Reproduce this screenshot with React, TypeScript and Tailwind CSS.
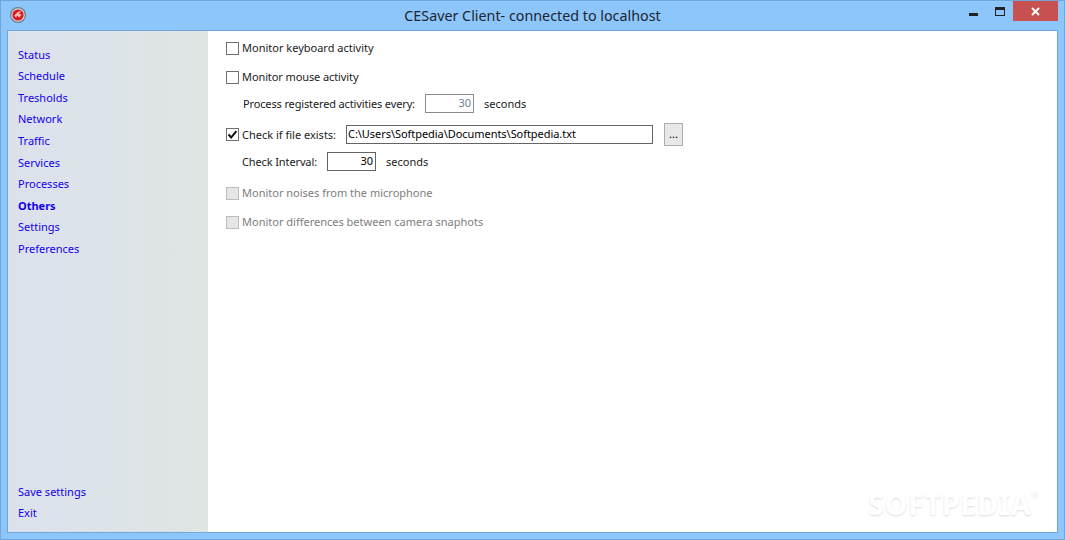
const navItems = [
  "Status",
  "Schedule",
  "Tresholds",
  "Network",
  "Traffic",
  "Services",
  "Processes",
  "Others",
  "Settings",
  "Preferences",
];

function AppIcon() {
  return (
    <svg width="16" height="16" viewBox="0 0 16 16" className="block">
      <circle cx="8" cy="8" r="8" fill="#6f7c8e" />
      <circle cx="8" cy="8" r="6.8" fill="#cfd6de" />
      <circle cx="8" cy="8" r="5.6" fill="#e0161c" />
      <path d="M4.2 8.6 L8 4.8 L11.6 4.2 L8.8 7 L11.8 7.4 L9 10.8 L7.6 8.8 L5.6 10.4 Z" fill="#f7b9b4" />
    </svg>
  );
}

function Checkbox({ checked, disabled }: { checked?: boolean; disabled?: boolean }) {
  return (
    <span
      className={
        disabled
          ? "flex h-[13px] w-[13px] shrink-0 border border-[#bcbcbc] bg-[#e6e6e6]"
          : "flex h-[13px] w-[13px] shrink-0 border border-[#707070] bg-white"
      }
    >
      {checked && (
        <svg width="11" height="11" viewBox="0 0 11 11">
          <path d="M1.5 5.5 L4.2 8.4 L9.4 2.2" fill="none" stroke="#111" strokeWidth="2" />
        </svg>
      )}
    </span>
  );
}

function NumberBox({ value, muted }: { value: string; muted?: boolean }) {
  return (
    <span
      className={
        muted
          ? "flex h-[19px] w-[49px] items-center justify-end border border-[#8a8a8a] pr-[2px] text-[#6d7f92]"
          : "flex h-[19px] w-[49px] items-center justify-end border border-[#646464] pr-[2px] text-black"
      }
    >
      {value}
    </span>
  );
}

export default function App() {
  return (
    <div className="flex h-[540px] w-[1065px] flex-col overflow-hidden border border-[#72a6d8] bg-[#8cc6fb] font-['Noto_Sans','Liberation_Sans',sans-serif] text-[11px] text-[#1a1a1a]">
      {/* title bar */}
      <div className="relative flex h-[29px] shrink-0 items-center justify-center">
        <div className="absolute left-[9px] top-[6px]">
          <AppIcon />
        </div>
        <span className="text-[14.3px] text-[#1c2530]">CESaver Client- connected to localhost</span>
        <div className="absolute right-[6px] top-0 flex items-start">
          <div className="mr-[17px] mt-[12px] h-[3px] w-[9px] bg-[#222]" />
          <div className="mr-[8px] mt-[6px] h-[9px] w-[10px] border border-t-[3px] border-[#222]" />
          <div className="flex h-[20px] w-[45px] items-center justify-center bg-[#c75050]">
            <svg width="9" height="9" viewBox="0 0 9 9">
              <path d="M1 1 L8 8 M8 1 L1 8" stroke="#fff" strokeWidth="2" />
            </svg>
          </div>
        </div>
      </div>

      <div className="mx-[6px] mb-[6px] flex min-h-0 flex-1 border border-[#72a6d8]">
        {/* sidebar */}
        <nav className="flex w-[200px] shrink-0 flex-col justify-between bg-gradient-to-r from-[#dbe2ed] to-[#dfe5e3] pb-[8px] pl-[10px] pt-[13px] text-[#1400f0]">
          <div className="flex flex-col">
            {navItems.map((item) => (
              <div
                key={item}
                className={item === "Others" ? "flex h-[21.6px] items-center font-bold" : "flex h-[21.6px] items-center"}
              >
                {item}
              </div>
            ))}
          </div>
          <div className="flex flex-col">
            <div className="flex h-[21px] items-center">Save settings</div>
            <div className="flex h-[21px] items-center">Exit</div>
          </div>
        </nav>

        {/* content */}
        <main className="relative flex-1 bg-white pl-[18px] pt-[10px]">
          <div className="flex h-[14px] items-center gap-[3px]">
            <Checkbox />
            <span>Monitor keyboard activity</span>
          </div>
          <div className="mt-[15px] flex h-[14px] items-center gap-[3px]">
            <Checkbox />
            <span className="tracking-[-0.1px]">Monitor mouse activity</span>
          </div>
          <div className="mt-[10px] flex h-[19px] items-center pl-[17px]">
            <span className="w-[182px] whitespace-nowrap pt-[2px] tracking-[-0.14px]">Process registered activities every:</span>
            <NumberBox value="30" muted />
            <span className="ml-[10px] pt-[2px]">seconds</span>
          </div>
          <div className="mt-[12px] flex h-[19px] items-center">
            <Checkbox checked />
            <span className="ml-[3px] w-[104px] pt-[2px]">Check if file exists:</span>
            <span className="flex h-[19px] w-[307px] items-center border border-[#646464] pl-[1px] tracking-[-0.05px] text-black">
              C:\Users\Softpedia\Documents\Softpedia.txt
            </span>
            <span className="ml-[11px] flex h-[23px] w-[19px] items-center justify-center border border-[#adadad] bg-[#e8e8e8] text-black">
              ...
            </span>
          </div>
          <div className="mt-[8px] flex h-[19px] items-center pl-[16px]">
            <span className="w-[85px] pt-[2px] tracking-[-0.12px]">Check Interval:</span>
            <NumberBox value="30" />
            <span className="ml-[10px] pt-[2px]">seconds</span>
          </div>
          <div className="mt-[15px] flex h-[14px] items-center gap-[3px] text-[#7d7d7d]">
            <Checkbox disabled />
            <span>Monitor noises from the microphone</span>
          </div>
          <div className="mt-[15px] flex h-[14px] items-center gap-[3px] text-[#7d7d7d]">
            <Checkbox disabled />
            <span>Monitor differences between camera snaphots</span>
          </div>
          <div className="absolute bottom-[14px] right-[18px] text-[29px] font-bold leading-none tracking-[0.5px] text-white [text-shadow:0_1px_2px_rgba(0,0,0,0.14)]">
            SOFTPEDIA<span className="align-top text-[9px]">®</span>
          </div>
        </main>
      </div>
    </div>
  );
}
